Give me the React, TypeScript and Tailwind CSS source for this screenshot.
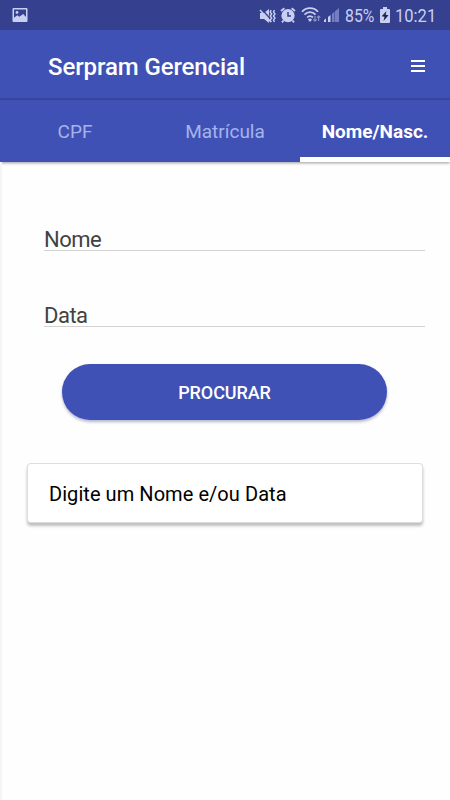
import type { ReactNode } from 'react';

function StatusBar() {
  return (
    <div className="flex h-[30px] items-start bg-[#35408f] text-[#c8cff2]">
      <svg className="ml-3 mt-2 h-[14px] w-4" viewBox="0 0 16 14">
        <path fill="currentColor" fillRule="evenodd" d="M1.5 0h13q1 0 1 1v12q0 1-1 1h-13q-1 0-1-1V1q0-1 1-1zM2 1.5v8.3l3.3-2.5 2 1.4L11.2 6 14 9V1.5z" />
        <circle cx="5" cy="4.4" r="1.4" fill="currentColor" />
      </svg>
      <svg className="ml-[231px] mt-2 h-4 w-[18px]" viewBox="0 0 18 16">
        <path fill="currentColor" d="M1 5h4l5-4v14l-5-4H1z" />
        <path d="M2 .5l11 12" stroke="#35408f" strokeWidth="1.4" />
        <path d="M1 2l11 12" stroke="currentColor" strokeWidth="1.5" />
        <path d="M12.2 2l-1 2 1.5 2-1.5 2 1.5 2-1.5 2 1 2M15.5 2l-1 2 1.5 2-1.5 2 1.5 2-1.5 2 1 2" fill="none" stroke="currentColor" strokeWidth="1.4" />
      </svg>
      <svg className="ml-[3px] mt-[7px] h-4 w-4" viewBox="0 0 16 16">
        <circle cx="8" cy="8.7" r="6.6" fill="currentColor" />
        <path d="M1 4l3.4-2.8M15 4l-3.4-2.8M3.5 13.5L2 15.3M12.5 13.5l1.5 1.8" stroke="currentColor" strokeWidth="1.8" />
        <path d="M8 5v4h3" fill="none" stroke="#35408f" strokeWidth="1.5" />
      </svg>
      <svg className="ml-[5px] mt-[7px] h-4 w-5" viewBox="0 0 20 16">
        <path d="M1 4.8C5-.1 13-.1 17 4.8M3.5 7.7c3-3.4 8-3.4 11 0M6.1 10.5c1.7-1.8 4-1.8 5.8 0" fill="none" stroke="currentColor" strokeWidth="1.8" />
        <path d="M7 12.5q2-2 4 0l-2 2.4z" fill="currentColor" />
        <path d="M14 9v5m-1.7-1.6L14 14.2l1.7-1.8M17.6 14V9m-1.7 1.7L17.6 9l1.7 1.7" fill="none" stroke="#8993cb" strokeWidth="1.2" />
      </svg>
      <svg className="ml-[3px] mt-2 h-[14px] w-[15px]" viewBox="0 0 15 14">
        <path d="M0 14v-2l2-1.6V14zM4 14V9l2.5-2v7z" fill="currentColor" />
        <path d="M8 14V5.8l2.5-2V14zM11 14V3.3L15 0v14z" fill="#737fc2" />
      </svg>
      <div className="ml-[6px] mt-[5px] w-[31px] whitespace-nowrap">
        <span className="inline-block origin-left scale-x-[0.88] text-[18px] leading-[22px]">85%</span>
      </div>
      <svg className="ml-1 mt-[7px] h-4 w-[10px]" viewBox="0 0 10 16">
        <path fill="currentColor" d="M3 0h4v2h2q1 0 1 1v12q0 1-1 1H1q-1 0-1-1V3q0-1 1-1h2z" />
        <path fill="#1d244f" d="M6.5 4L1.7 9.3l2.8.5-1 4.2 5-5.7-2.9-.5z" />
      </svg>
      <div className="ml-[5px] mt-[5px] w-[42px] whitespace-nowrap">
        <span className="inline-block origin-left scale-x-[0.92] text-[18px] leading-[22px]">10:21</span>
      </div>
    </div>
  );
}

function Header() {
  return (
    <header className="flex h-[70px] items-center justify-between border-b-2 border-[#3948a4] bg-[#4051b5] pl-12 pr-[25px] pt-[5px]">
      <h1 className="text-[24px] font-medium leading-7 tracking-[-0.1px] text-white">Serpram Gerencial</h1>
      <button aria-label="Menu" className="mb-0.5 flex w-[14px] flex-col gap-[3px]">
        <span className="h-[2px] bg-white" />
        <span className="h-[2px] bg-white" />
        <span className="h-[2px] bg-white" />
      </button>
    </header>
  );
}

function Tab({ children, active = false }: { children: ReactNode; active?: boolean }) {
  return (
    <button
      className={
        active
          ? 'flex-1 border-b-[5px] border-white pt-[7px] text-[19px] font-bold text-white'
          : 'flex-1 border-b-[5px] border-transparent pt-[7px] text-[19px] text-[#a4b4ed]'
      }
    >
      {children}
    </button>
  );
}

function Field({ label }: { label: string }) {
  return (
    <div className="h-[26px] border-b border-[#d2d2d2] text-[22px] leading-[29px] tracking-[-0.5px] text-[#424242]">
      {label}
    </div>
  );
}

export default function App() {
  return (
    <div className="flex h-[800px] w-[450px] flex-col overflow-hidden bg-[#fefefe] font-[Roboto,sans-serif]">
      <StatusBar />
      <Header />
      <nav className="flex h-[62px] bg-[#4051b5] shadow-[0_1px_3px_rgba(0,0,0,0.4)]">
        <Tab>CPF</Tab>
        <Tab>Matrícula</Tab>
        <Tab active>Nome/Nasc.</Tab>
      </nav>
      <main className="flex flex-1 flex-col border-l-2 border-[#f5f5f5]">
        <form className="ml-[42px] mr-[25px] mt-[63px] flex flex-col gap-[50px]">
          <Field label="Nome" />
          <Field label="Data" />
        </form>
        <button className="ml-[60px] mt-[37px] h-14 w-[325px] rounded-full bg-[#4051b5] text-[18px] font-medium tracking-[-0.1px] text-white shadow-[0_2px_3px_rgba(40,50,120,0.35)]">
          PROCURAR
        </button>
        <section className="ml-[26px] mt-11 flex h-[58px] w-[394px] items-center rounded-[3px] bg-white pl-[21px] pt-0.5 text-[20px] tracking-[0.06px] text-black shadow-[0_0_0_1px_#dedede,0_3px_3px_1px_rgba(0,0,0,0.25)]">
          Digite um Nome e/ou Data
        </section>
      </main>
    </div>
  );
}
